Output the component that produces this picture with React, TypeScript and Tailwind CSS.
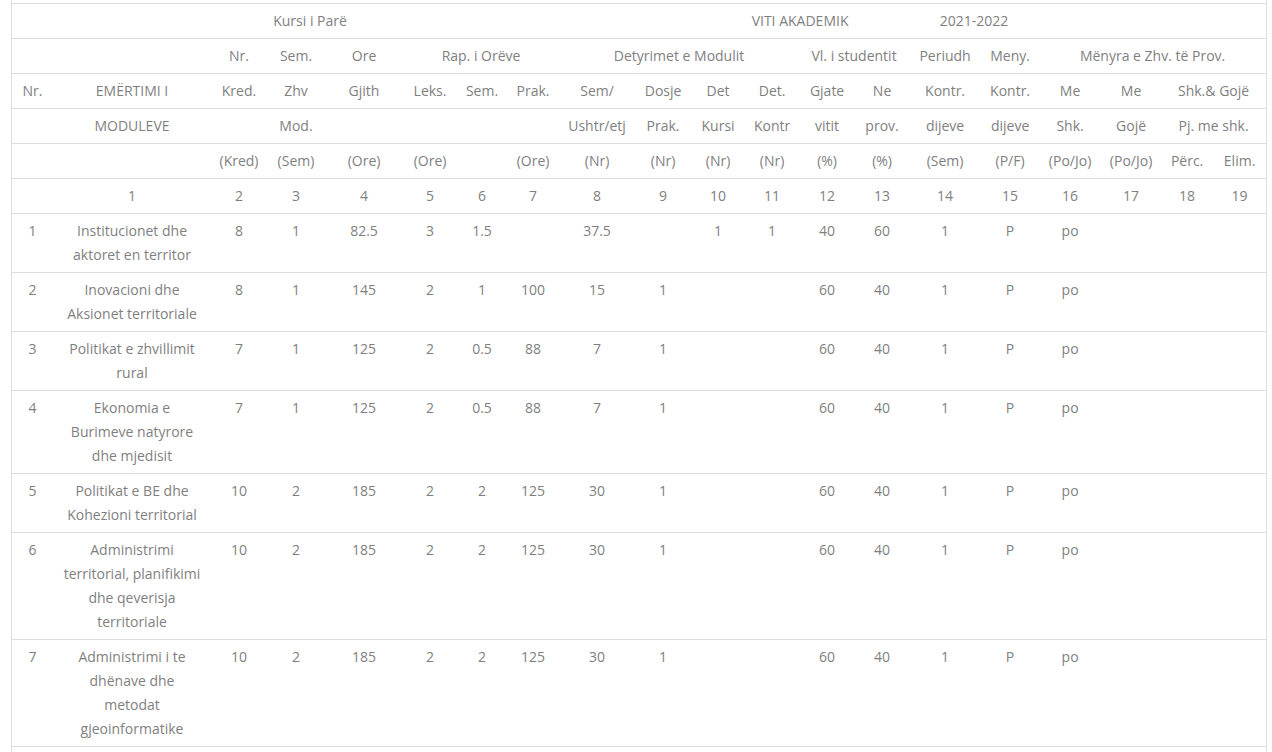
import React from "react";

const cell = "border-t border-[#dddddd] px-1 py-[5px] leading-6 text-center whitespace-nowrap";
const dcell = "border-t border-[#dddddd] px-1 py-[5px] leading-6 text-center align-top whitespace-nowrap";

type Row = { nr: string; name: string[]; v: string[] };

const rows: Row[] = [
  { nr: "1", name: ["Institucionet dhe", "aktoret en territor"], v: ["8", "1", "82.5", "3", "1.5", "", "37.5", "", "1", "1", "40", "60", "1", "P", "po", "", "", ""] },
  { nr: "2", name: ["Inovacioni dhe", "Aksionet territoriale"], v: ["8", "1", "145", "2", "1", "100", "15", "1", "", "", "60", "40", "1", "P", "po", "", "", ""] },
  { nr: "3", name: ["Politikat e zhvillimit", "rural"], v: ["7", "1", "125", "2", "0.5", "88", "7", "1", "", "", "60", "40", "1", "P", "po", "", "", ""] },
  { nr: "4", name: ["Ekonomia e", "Burimeve natyrore", "dhe mjedisit"], v: ["7", "1", "125", "2", "0.5", "88", "7", "1", "", "", "60", "40", "1", "P", "po", "", "", ""] },
  { nr: "5", name: ["Politikat e BE dhe", "Kohezioni territorial"], v: ["10", "2", "185", "2", "2", "125", "30", "1", "", "", "60", "40", "1", "P", "po", "", "", ""] },
  { nr: "6", name: ["Administrimi", "territorial, planifikimi", "dhe qeverisja", "territoriale"], v: ["10", "2", "185", "2", "2", "125", "30", "1", "", "", "60", "40", "1", "P", "po", "", "", ""] },
  { nr: "7", name: ["Administrimi i te", "dhënave dhe", "metodat", "gjeoinformatike"], v: ["10", "2", "185", "2", "2", "125", "30", "1", "", "", "60", "40", "1", "P", "po", "", "", ""] },
];

const rowC = ["Nr.", "EMËRTIMI I", "Kred.", "Zhv", "Gjith", "Leks.", "Sem.", "Prak.", "Sem/", "Dosje", "Det", "Det.", "Gjate", "Ne", "Kontr.", "Kontr.", "Me", "Me"];
const rowD = ["", "MODULEVE", "", "Mod.", "", "", "", "", "Ushtr/etj", "Prak.", "Kursi", "Kontr", "vitit", "prov.", "dijeve", "dijeve", "Shk.", "Gojë"];
const rowE = ["", "", "(Kred)", "(Sem)", "(Ore)", "(Ore)", "", "(Ore)", "(Nr)", "(Nr)", "(Nr)", "(Nr)", "(%)", "(%)", "(Sem)", "(P/F)", "(Po/Jo)", "(Po/Jo)", "Përc.", "Elim."];
const rowF = ["", "1", "2", "3", "4", "5", "6", "7", "8", "9", "10", "11", "12", "13", "14", "15", "16", "17", "18", "19"];

export default function App() {
  return (
    <div className="min-h-screen bg-white" style={{ fontFamily: '"Open Sans", "Noto Sans", sans-serif' }}>
      <div className="ml-[11px] w-[1256px] h-[752px] border-l border-r border-[#dddddd] pt-[3px] text-[14px] text-[#7f7f7f]">
        <table className="table-fixed w-[1254px] border-separate border-spacing-0">
          <colgroup>
            <col className="w-[41px]" />
            <col className="w-[158px]" />
            <col className="w-[56px]" />
            <col className="w-[58px]" />
            <col className="w-[78px]" />
            <col className="w-[54px]" />
            <col className="w-[50px]" />
            <col className="w-[52px]" />
            <col className="w-[76px]" />
            <col className="w-[56px]" />
            <col className="w-[54px]" />
            <col className="w-[54px]" />
            <col className="w-[56px]" />
            <col className="w-[54px]" />
            <col className="w-[72px]" />
            <col className="w-[58px]" />
            <col className="w-[62px]" />
            <col className="w-[60px]" />
            <col className="w-[52px]" />
            <col className="w-[53px]" />
          </colgroup>
          <tbody>
            <tr>
              <td className={cell} colSpan={2}></td>
              <td className={cell + " pl-[10px]"} colSpan={3}>Kursi i Parë</td>
              <td className={cell} colSpan={5}></td>
              <td className={cell}></td>
              <td className={cell} colSpan={2}>VITI AKADEMIK</td>
              <td className={cell}></td>
              <td className={cell} colSpan={2}>2021-2022</td>
              <td className={cell} colSpan={4}></td>
            </tr>
            <tr>
              <td className={cell} colSpan={2}></td>
              <td className={cell}>Nr.</td>
              <td className={cell}>Sem.</td>
              <td className={cell}>Ore</td>
              <td className={cell} colSpan={3}>Rap. i Orëve</td>
              <td className={cell} colSpan={4}>Detyrimet e Modulit</td>
              <td className={cell} colSpan={2}>Vl. i studentit</td>
              <td className={cell}>Periudh</td>
              <td className={cell}>Meny.</td>
              <td className={cell} colSpan={4}>Mënyra e Zhv. të Prov.</td>
            </tr>
            <tr>
              {rowC.map((t, i) => (
                <td key={i} className={cell}>{t}</td>
              ))}
              <td className={cell} colSpan={2}>Shk.&amp; Gojë</td>
            </tr>
            <tr>
              {rowD.map((t, i) => (
                <td key={i} className={cell}>{t}</td>
              ))}
              <td className={cell} colSpan={2}>Pj. me shk.</td>
            </tr>
            <tr>
              {rowE.map((t, i) => (
                <td key={i} className={cell}>{t}</td>
              ))}
            </tr>
            <tr>
              {rowF.map((t, i) => (
                <td key={i} className={cell}>{t}</td>
              ))}
            </tr>
            {rows.map((r, ri) => {
              const last = ri === rows.length - 1;
              const c = dcell + (last ? " border-b" : "");
              return (
                <tr key={r.nr}>
                  <td className={c}>{r.nr}</td>
                  <td className={c}>
                    {r.name.map((l, i) => (
                      <div key={i}>{l}</div>
                    ))}
                  </td>
                  {r.v.map((t, i) => (
                    <td key={i} className={c}>{t}</td>
                  ))}
                </tr>
              );
            })}
          </tbody>
        </table>
      </div>
    </div>
  );
}
